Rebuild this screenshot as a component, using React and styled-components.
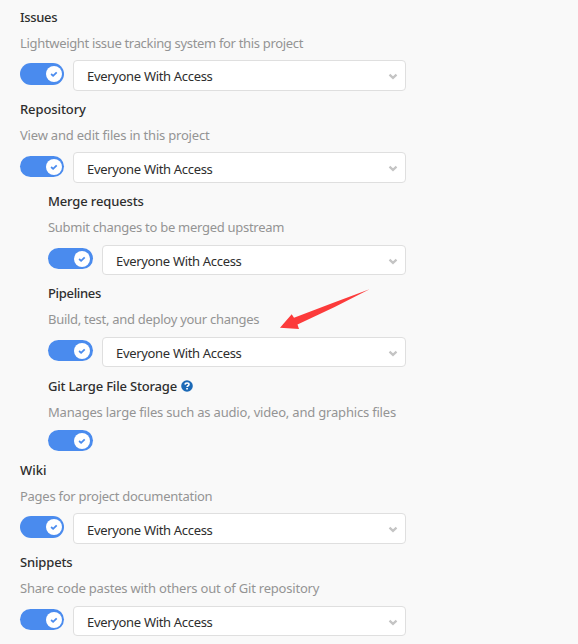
import React from "react";
import styled, { createGlobalStyle } from "styled-components";

const GlobalStyle = createGlobalStyle`
  * { box-sizing: border-box; }
  body {
    margin: 0;
    background: #f9f9f9;
    overflow: hidden;
    font-family: "Noto Sans", "Open Sans", sans-serif;
    font-size: 13px;
  }
`;

const Page = styled.main`
  position: relative;
  width: 578px;
  height: 644px;
  padding: 8px 0 0 20px;
  overflow: hidden;
  background: #f9f9f9;
`;

const Feature = styled.section`
  width: 386px;
  height: ${(p) => p.$height}px;
  padding-left: ${(p) => (p.$nested ? 28 : 0)}px;
`;

const Title = styled.h2`
  display: flex;
  align-items: center;
  gap: 4px;
  height: 18px;
  margin: 0;
  font-size: 13px;
  font-weight: 500;
  line-height: 18px;
  color: #2e2e2e;
  white-space: nowrap;
`;

const TitleText = styled.span`
  letter-spacing: ${(p) => p.$spacing}px;
`;

const Description = styled.p`
  height: 18px;
  margin: 8px 0;
  line-height: 18px;
  color: #949494;
  white-space: nowrap;
  letter-spacing: ${(p) => p.$spacing}px;
`;

const Controls = styled.div`
  display: flex;
  align-items: flex-start;
  gap: 9px;
`;

const Toggle = styled.button`
  display: flex;
  justify-content: flex-end;
  align-items: center;
  flex: none;
  width: ${(p) => (p.$nested ? 45 : 44)}px;
  height: ${(p) => p.$height}px;
  margin: ${(p) => p.$top}px 0 0;
  padding: 0 ${(p) => (p.$nested ? 3 : 2)}px 0 0;
  border: 0;
  border-radius: 11px;
  background: #4a8bee;
`;

const Select = styled.div`
  display: flex;
  align-items: center;
  justify-content: space-between;
  flex: 1;
  height: ${(p) => p.$height}px;
  margin-top: ${(p) => p.$top}px;
  padding: ${(p) => p.$inset}px 7px 0 13px;
  border: 1px solid #dfdfdf;
  border-radius: 4px;
  background: #fff;
  color: #2e2e2e;
`;

const SelectText = styled.span`
  line-height: 18px;
  letter-spacing: -0.32px;
  white-space: nowrap;
`;

const Chevron = styled.svg`
  display: block;
`;

const Arrow = styled.svg`
  position: absolute;
  left: 278px;
  top: 286px;
`;

const features = [
  { title: "Issues", titleSpacing: -0.33, text: "Lightweight issue tracking system for this project", spacing: -0.33, height: 92, toggle: 22, top: 3, select: 31, inset: 1 },
  { title: "Repository", titleSpacing: -0.1, text: "View and edit files in this project", spacing: -0.2, height: 92, toggle: 21, top: 4, select: 31 },
  { title: "Merge requests", titleSpacing: -0.14, text: "Submit changes to be merged upstream", spacing: -0.28, height: 92, toggle: 21, top: 4, select: 30, selectTop: 1, nested: true },
  { title: "Pipelines", titleSpacing: -0.33, text: "Build, test, and deploy your changes", spacing: -0.28, height: 93, toggle: 21, top: 4, select: 30, selectTop: 1, nested: true },
  { title: "Git Large File Storage", titleSpacing: -0.18, text: "Manages large files such as audio, video, and graphics files", spacing: -0.19, height: 84, toggle: 21, top: 1, nested: true, help: true },
  { title: "Wiki", text: "Pages for project documentation", spacing: -0.27, height: 92, toggle: 22, top: 3, select: 31 },
  { title: "Snippets", titleSpacing: -0.15, text: "Share code pastes with others out of Git repository", spacing: -0.21, height: 90, toggle: 21, top: 4, select: 30, selectTop: 1 },
];

function HelpIcon() {
  return (
    <svg width="12" height="12" viewBox="0 0 12 12" aria-label="Help">
      <circle cx="6" cy="6" r="5.8" fill="#1b69b6" />
      <path d="M4.1 4.6C4.2 2.5 8 2.5 8 4.6C8 5.8 6.1 5.7 6.1 7.1" fill="none" stroke="#fff" strokeWidth="1.6" />
      <path d="M5.2 8h1.7v1.6H5.2z" fill="#fff" />
    </svg>
  );
}

function Knob() {
  return (
    <svg width="16" height="16" viewBox="0 0 16 16">
      <circle cx="8" cy="8" r="8" fill="#fff" />
      <path d="M5.1 8L7.1 9.8L10.7 6.3" fill="none" stroke="#4a8bee" strokeWidth="1.8" />
    </svg>
  );
}

export default function App() {
  return (
    <>
      <GlobalStyle />
      <Page>
        {features.map((f) => (
          <Feature key={f.title} $height={f.height} $nested={f.nested}>
            <Title>
              <TitleText $spacing={f.titleSpacing || 0}>{f.title}</TitleText>
              {f.help && <HelpIcon />}
            </Title>
            <Description $spacing={f.spacing}>{f.text}</Description>
            <Controls>
              <Toggle $nested={f.nested} $height={f.toggle} $top={f.top} aria-label={f.title} aria-pressed="true">
                <Knob />
              </Toggle>
              {f.select && (
                <Select $height={f.select} $top={f.selectTop || 0} $inset={f.inset || 2}>
                  <SelectText>Everyone With Access</SelectText>
                  <Chevron width="10" height="7" viewBox="0 0 10 7">
                    <path d="M1.5 1.6L5 4.9L8.5 1.6" fill="none" stroke="#c4c4c4" strokeWidth="2.2" />
                  </Chevron>
                </Select>
              )}
            </Controls>
          </Feature>
        ))}
        <Arrow width="94" height="46" viewBox="0 0 94 46">
          <path d="M2 41.8L13.7 28.2L16 31.8Q54 17 91.5 3.2Q56 22 19.5 38.5L21 43Z" fill="#fc3b3b" />
        </Arrow>
      </Page>
    </>
  );
}
